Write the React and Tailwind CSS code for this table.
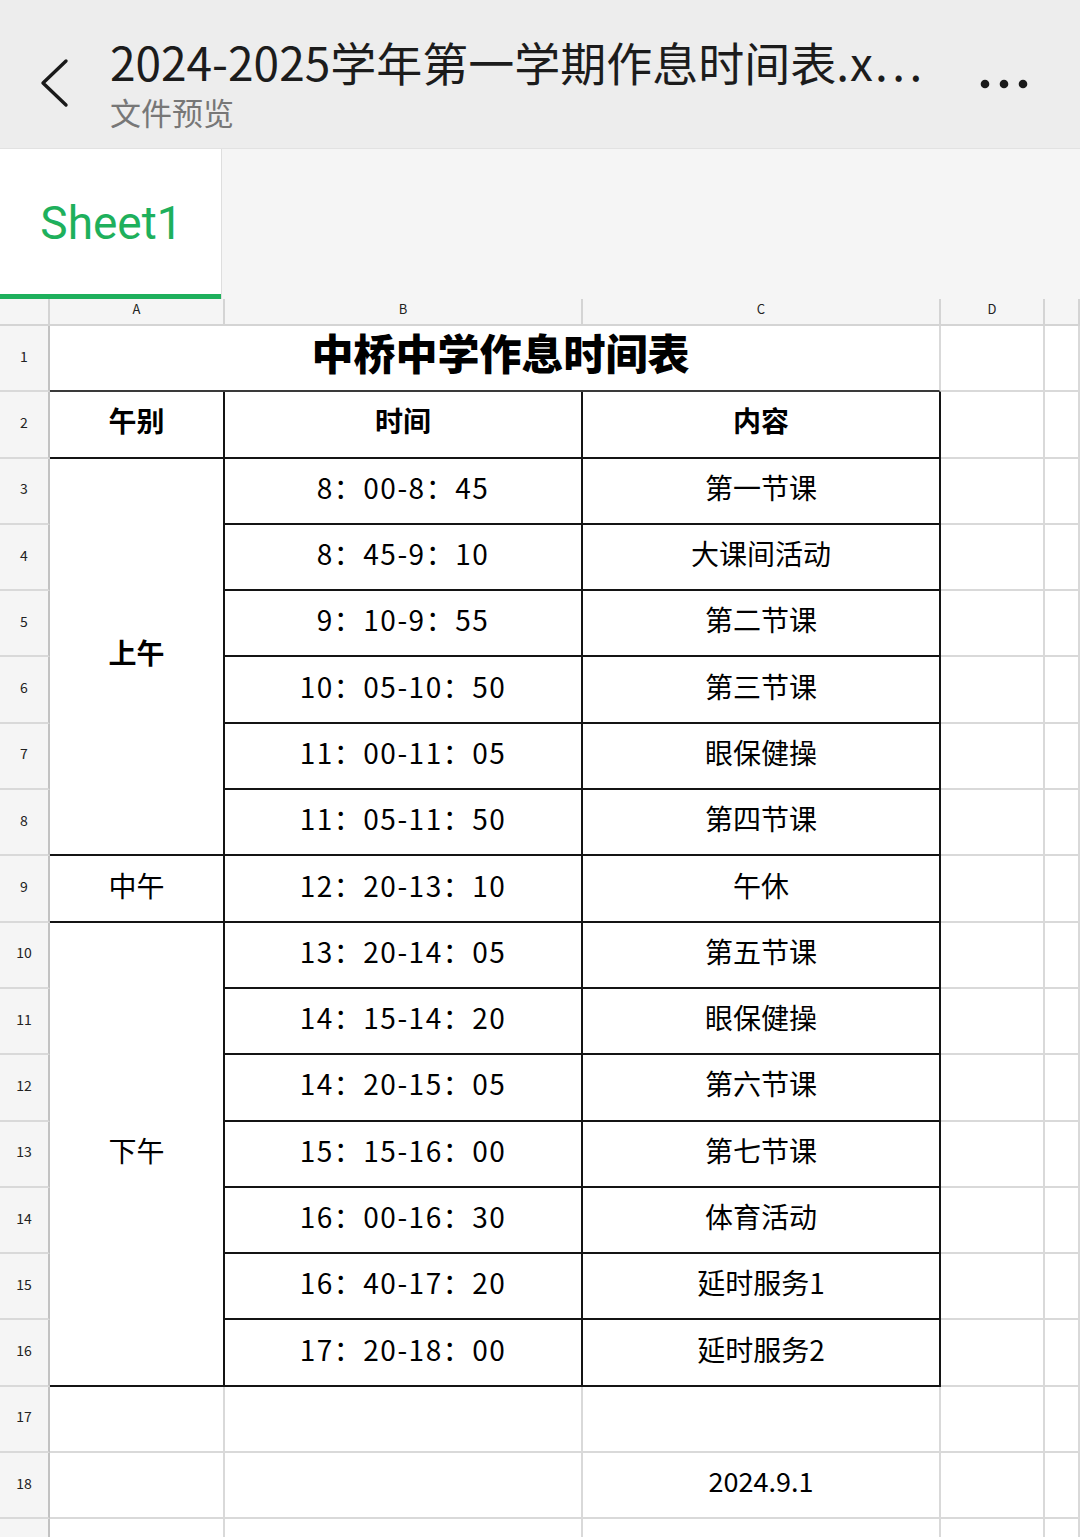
import React from "react";

const morning = [
  ["8：00-8：45", "第一节课"],
  ["8：45-9：10", "大课间活动"],
  ["9：10-9：55", "第二节课"],
  ["10：05-10：50", "第三节课"],
  ["11：00-11：05", "眼保健操"],
  ["11：05-11：50", "第四节课"],
];

const afternoon = [
  ["13：20-14：05", "第五节课"],
  ["14：15-14：20", "眼保健操"],
  ["14：20-15：05", "第六节课"],
  ["15：15-16：00", "第七节课"],
  ["16：00-16：30", "体育活动"],
  ["16：40-17：20", "延时服务1"],
  ["17：20-18：00", "延时服务2"],
];

const light = "border-r-2 border-b-2 border-[#d9d9d9]";
const dark = "border-r-2 border-b-2 border-[#141414] flex items-center justify-center text-[28px] pb-[8px]";
const time = dark + " tracking-[1.5px]";

function RowHead({ n }) {
  return (
    <div className="flex items-center justify-center bg-[#f5f5f5] border-r-2 border-r-[#c2c2c2] border-b-2 border-b-[#d9d9d9] text-[14px] text-[#222] pb-[4px]">
      {n}
    </div>
  );
}

function Tail() {
  return (
    <>
      <div className={light} />
      <div className={light} />
    </>
  );
}

export default function App() {
  let rowNo = 3;

  return (
    <div
      className="w-[1080px] h-[1537px] overflow-hidden bg-white text-black"
      style={{ fontFamily: '"Noto Sans CJK SC", "Noto Sans", sans-serif' }}
    >
      {/* Top bar */}
      <div className="h-[148px] bg-[#ededed] flex items-start">
        <div className="w-[110px] pt-[58px] pl-[38px]">
          <svg width="34" height="50" viewBox="0 0 34 50">
            <path d="M28 3 L5 25 L28 47" fill="none" stroke="#1a1a1a" strokeWidth="3.4" strokeLinecap="round" strokeLinejoin="round" />
          </svg>
        </div>
        <div className="pt-[35px] flex flex-col">
          <div className="text-[46px] leading-[52px] text-[#1c1c1c] whitespace-nowrap">
            2024-2025学年第一学期作息时间表<span className="tracking-[1px]">.x…</span>
          </div>
          <div className="text-[31px] leading-[40px] text-[#777] mt-[5px]">文件预览</div>
        </div>
        <div className="ml-auto mr-[52px] pt-[78px]">
          <svg width="48" height="12" viewBox="0 0 48 12">
            <circle cx="5" cy="6" r="4.3" fill="#1a1a1a" />
            <circle cx="24" cy="6" r="4.3" fill="#1a1a1a" />
            <circle cx="43" cy="6" r="4.3" fill="#1a1a1a" />
          </svg>
        </div>
      </div>

      {/* Sheet tabs */}
      <div className="h-[151px] flex bg-[#f5f5f5] border-t border-[#e2e2e2]">
        <div className="w-[222px] bg-white border-r border-[#dedede] flex flex-col">
          <div className="flex-1 flex items-center justify-center">
            <span className="text-[46px] text-[#1eb05c] mt-[4px] ml-[2px]" style={{ fontFamily: "Roboto, sans-serif" }}>
              Sheet1
            </span>
          </div>
          <div className="h-[5px] bg-[#1eb05c]" />
        </div>
      </div>

      {/* Grid */}
      <div className="grid grid-cols-[50px_175px_358px_358px_104px_1fr] grid-rows-[27px_repeat(19,66.3px)]">
        {/* Column letters */}
        <div className="bg-[#f5f5f5] border-r-2 border-b-2 border-[#d4d4d4]" />
        {["A", "B", "C", "D", ""].map((l, i) => (
          <div key={i} className="bg-[#f5f5f5] border-r-2 border-b-2 border-[#d4d4d4] flex items-center justify-center text-[13px] text-[#222] pb-[6px]">
            {l}
          </div>
        ))}

        {/* Row 1 */}
        <RowHead n={1} />
        <div className="col-span-3 border-r-2 border-r-[#d9d9d9] border-b-2 border-b-[#3a3a3a] flex items-center justify-center text-[42px] font-black pb-[14px] pl-[12px]">
          中桥中学作息时间表
        </div>
        <Tail />

        {/* Row 2 */}
        <RowHead n={2} />
        <div className={dark + " font-bold"}>午别</div>
        <div className={dark + " font-bold"}>时间</div>
        <div className={dark + " font-bold"}>内容</div>
        <Tail />

        {/* Morning */}
        {morning.map(([t, c], i) => (
          <React.Fragment key={"m" + i}>
            <RowHead n={rowNo++} />
            {i === 0 && <div className={dark + " row-span-6 font-bold"}>上午</div>}
            <div className={time}>{t}</div>
            <div className={dark}>{c}</div>
            <Tail />
          </React.Fragment>
        ))}

        {/* Noon */}
        <RowHead n={rowNo++} />
        <div className={dark}>中午</div>
        <div className={time}>12：20-13：10</div>
        <div className={dark}>午休</div>
        <Tail />

        {/* Afternoon */}
        {afternoon.map(([t, c], i) => (
          <React.Fragment key={"a" + i}>
            <RowHead n={rowNo++} />
            {i === 0 && <div className={dark + " row-span-7"}>下午</div>}
            <div className={time}>{t}</div>
            <div className={dark}>{c}</div>
            <Tail />
          </React.Fragment>
        ))}

        {/* Rows 17-19 */}
        {[17, 18, 19].map((n) => (
          <React.Fragment key={n}>
            <RowHead n={n} />
            <div className={light} />
            <div className={light} />
            <div className={light + " flex items-center justify-center text-[27px] pb-[8px]"}>{n === 18 ? "2024.9.1" : ""}</div>
            <Tail />
          </React.Fragment>
        ))}
      </div>
    </div>
  );
}
